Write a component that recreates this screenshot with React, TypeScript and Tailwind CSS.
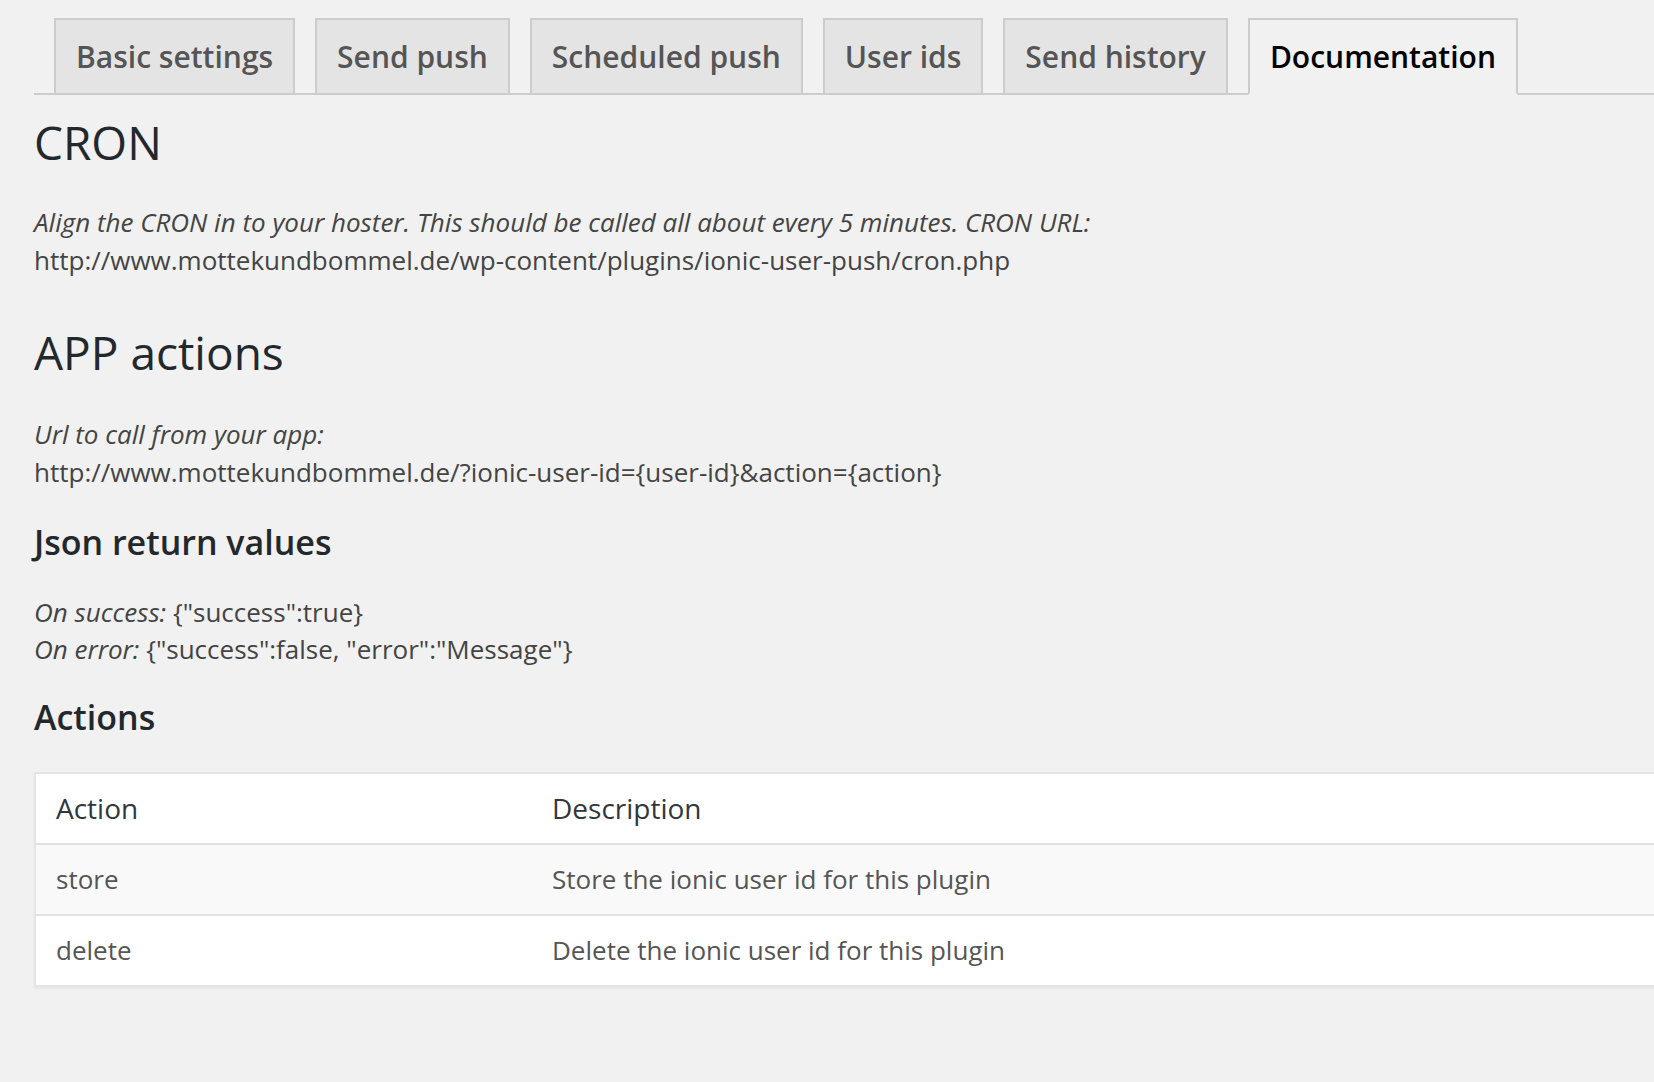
import React from 'react';

const tabs = ['Basic settings', 'Send push', 'Scheduled push', 'User ids', 'Send history', 'Documentation'];

const actions = [
  { name: 'store', description: 'Store the ionic user id for this plugin' },
  { name: 'delete', description: 'Delete the ionic user id for this plugin' },
];

const App: React.FC = () => {
  const active = 'Documentation';

  return (
    <div className="min-h-screen w-full overflow-hidden bg-[#f1f1f1] pl-[34px] pt-[18px] font-['Open_Sans',sans-serif] text-[#444]">
      {/* tab bar */}
      <div className="flex items-end gap-[20px] border-b-2 border-[#ccc] pl-[20px]">
        {tabs.map((tab) =>
          tab === active ? (
            <div
              key={tab}
              className="-mb-[2px] flex h-[77px] items-center border-2 border-[#ccc] border-b-[#f1f1f1] bg-[#f1f1f1] px-[20px] text-[30px] font-semibold text-black"
            >
              {tab}
            </div>
          ) : (
            <div
              key={tab}
              className="flex h-[75px] items-center border-2 border-b-0 border-[#ccc] bg-[#e4e4e4] px-[20px] text-[30px] font-semibold text-[#555]"
            >
              {tab}
            </div>
          )
        )}
      </div>

      <h2 className="mt-[18px] text-[46px] leading-[58px] font-normal text-[#23282d]">CRON</h2>
      <p className="mt-[32px] text-[26px] leading-[38px]">
        <em>Align the CRON in to your hoster. This should be called all about every 5 minutes. CRON URL:</em>
        <br />
        http://www.mottekundbommel.de/wp-content/plugins/ionic-user-push/cron.php
      </p>

      <h2 className="mt-[44px] text-[46px] leading-[58px] font-normal text-[#23282d]">APP actions</h2>
      <p className="mt-[34px] text-[26px] leading-[38px]">
        <em>Url to call from your app:</em>
        <br />
        http://www.mottekundbommel.de/?ionic-user-id={'{user-id}'}&amp;action={'{action}'}
      </p>

      <h3 className="mt-[30px] text-[34px] leading-[42px] font-semibold text-[#23282d]">Json return values</h3>
      <p className="mt-[31px] text-[26px] leading-[37px]">
        <em>On success:</em> {'{"success":true}'}
        <br />
        <em>On error:</em> {'{"success":false, "error":"Message"}'}
      </p>

      <h3 className="mt-[28px] text-[34px] leading-[42px] font-semibold text-[#23282d]">Actions</h3>

      <table className="mt-[34px] w-[1660px] border-collapse border-2 border-[#e5e5e5] bg-white text-left shadow-[0_2px_2px_rgba(0,0,0,0.04)]">
        <thead>
          <tr className="border-b-2 border-[#e1e1e1]">
            <th className="w-[497px] px-[20px] py-[16px] text-[28px] leading-[37px] font-normal text-[#32373c]">Action</th>
            <th className="px-[20px] py-[16px] text-[28px] leading-[37px] font-normal text-[#32373c]">Description</th>
          </tr>
        </thead>
        <tbody>
          {actions.map((a, i) => (
            <tr key={a.name} className={i === 0 ? 'border-b-2 border-[#e1e1e1] bg-[#f9f9f9]' : 'bg-white'}>
              <td className="px-[20px] py-[16px] text-[26px] leading-[37px] text-[#555]">{a.name}</td>
              <td className="px-[20px] py-[16px] text-[26px] leading-[37px] text-[#555]">{a.description}</td>
            </tr>
          ))}
        </tbody>
      </table>
    </div>
  );
};

export default App;
